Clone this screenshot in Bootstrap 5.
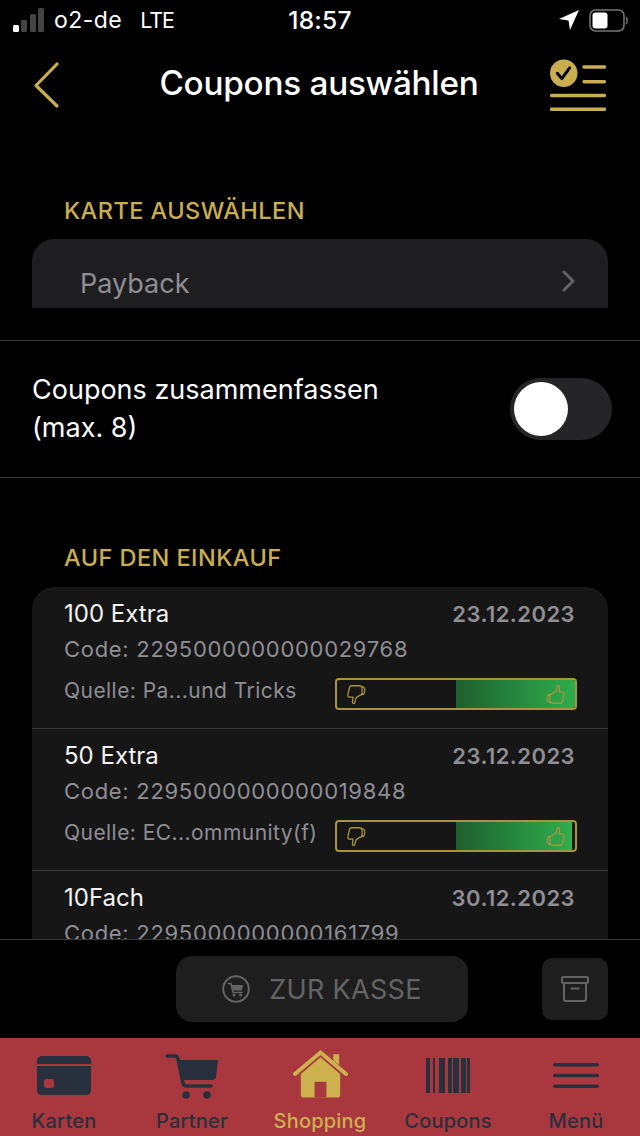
<!DOCTYPE html>
<html lang="de">
<head>
    <meta charset="UTF-8">
    <meta name="viewport" content="width=device-width, initial-scale=1.0">
    <title>Coupons auswählen</title>
    <link href="https://cdn.jsdelivr.net/npm/bootstrap@5.3.0/dist/css/bootstrap.min.css" rel="stylesheet">
    <style>
        html, body { background: #000; margin: 0; }
        body { font-family: Inter, "Liberation Sans", sans-serif; color: #fff; }
        .phone { width: 640px; height: 1136px; overflow: hidden; }

        .status-bar { height: 40px; padding: 0 12px; font-size: 23px; line-height: 40px; position: relative; }
        .status-left { gap: 9px; letter-spacing: .45px; }
        .status-time { position: absolute; left: 0; right: 0; top: 0; text-align: center; font-weight: 500; font-size: 24.500px; letter-spacing: .25px; }
        .carrier-gap { margin-left: 9px; font-size: 21.500px; letter-spacing: -1px; }

        .head-bar { height: 90px; padding: 0 34px 0 32px; }
        .head-back { width: 56px; }
        .head-title { font-size: 33.300px; font-weight: 500; letter-spacing: -.25px; line-height: 1; margin-top: -3px; }

        .scroll-area { height: 809px; overflow: hidden; }
        .gold-label { color: #c9ae4f; font-size: 23.500px; font-weight: 500; line-height: 28px; padding-left: 64px; letter-spacing: .45px; }
        .card-label { padding-top: 67px; }
        .card-select { margin: 14px 32px 0; height: 69px; background: #1e1e20; border-radius: 22px 22px 0 0; padding: 26px 32px 0 48px; color: #8e8e93; font-size: 27px; line-height: 38px; }
        .merge-row { margin-top: 32px; height: 138px; border-top: 1px solid #38383a; border-bottom: 1px solid #38383a; padding: 0 28px 0 32px; font-size: 27px; line-height: 38px; }
        .switch-track { width: 102px; height: 62px; border-radius: 31px; background: #252527; position: relative; }
        .switch-knob { width: 54px; height: 54px; border-radius: 50%; background: #fff; position: absolute; left: 4px; top: 4px; }
        .basket-label { padding-top: 66px; }
        .coupon-list { margin: 15px 32px 0; background: #161617; border-radius: 22px 22px 0 0; }
        .coupon-row { height: 142px; padding: 13px 33px 0 32px; border-bottom: 1px solid #38383a; }
        .coupon-row:last-child { border-bottom: 0; }
        .coupon-name { font-size: 24px; line-height: 28px; color: #f2f2f2; }
        .coupon-date { font-size: 22px; line-height: 28px; font-weight: 600; color: #8e8e93; letter-spacing: .45px; }
        .coupon-text { font-size: 22px; line-height: 28px; color: #8e8e93; letter-spacing: .7px; }
        .coupon-code { margin-top: 7px; }
        .coupon-source { margin-top: 15px; height: 32px; margin-right: -2px; }
        .source-text { font-size: 21px; letter-spacing: .45px; margin-top: -1px; }
        .vote-bar { width: 242px; height: 32px; border: 2px solid #a8933f; border-radius: 4px; position: relative; overflow: hidden; flex: none; }
        .vote-fill { position: absolute; left: 119px; top: 0; bottom: 0; background: linear-gradient(90deg, #1f5f30, #2fae4c); }
        .vote-down { position: absolute; left: 9px; top: 4px; }
        .vote-up { position: absolute; right: 9px; top: 4px; }

        .action-bar { height: 99px; border-top: 1px solid #38383a; padding: 16px 32px 0 176px; background: #000; }
        .checkout-btn { width: 292px; height: 66px; border-radius: 16px; background: #1e1e1f; color: #646464; font-size: 27px; gap: 19px; letter-spacing: .3px; }
        .checkout-btn span { position: relative; top: 1px; }
        .archive-btn { width: 66px; height: 62px; border-radius: 10px; background: #1e1e1f; margin-top: 2px; }

        .tab-bar { height: 98px; background: #a8373e; }
        .tab-item { width: 128px; color: #29303d; font-size: 20px; line-height: 24px; font-weight: 500; letter-spacing: .2px; }
        .tab-icon { height: 61px; margin-bottom: 10px; }
        .tab-item.is-active { color: #cdb14f; }
        .shift-card { margin-bottom: 4px; }
        .shift-house { margin-bottom: 1px; }
        .shift-codes { margin-bottom: 6px; }
        .shift-menu { margin-bottom: 11px; }
    </style>
</head>
<body>
<div class="phone d-flex flex-column">

    <!-- Status bar -->
    <div class="status-bar d-flex justify-content-between align-items-center flex-shrink-0">
        <div class="status-left d-flex align-items-center">
            <svg width="33" height="24" viewBox="0 0 33 24">
                <rect x="1" y="17" width="6" height="7" rx="1.500" fill="#fff"/>
                <rect x="9" y="12" width="6" height="12" rx="1.500" fill="#444"/>
                <rect x="18" y="6" width="6" height="18" rx="1.500" fill="#444"/>
                <rect x="26" y="0" width="6" height="24" rx="1.500" fill="#444"/>
            </svg>
            <span>o2-de</span><span class="carrier-gap">LTE</span>
        </div>
        <div class="status-time">18:57</div>
        <div class="d-flex align-items-center" style="gap:9px">
            <svg width="22" height="22" viewBox="0 0 22 22"><path d="M1 10 L21 1 L12 21 L10.500 11.500 Z" fill="#fff"/></svg>
            <svg width="39" height="23" viewBox="0 0 39 23">
                <rect x="1" y="1" width="34" height="21" rx="5.500" fill="none" stroke="#777" stroke-width="1.500"/>
                <rect x="3.500" y="3.500" width="15" height="16" rx="3" fill="#fff"/>
                <path d="M37 8 C38.500 9 38.500 14 37 15" fill="none" stroke="#777" stroke-width="1.500"/>
            </svg>
        </div>
    </div>

    <!-- Header -->
    <div class="head-bar d-flex justify-content-between align-items-center flex-shrink-0">
        <div class="head-back">
            <svg class="d-block" width="32" height="46" viewBox="0 0 32 46"><path d="M25 2 L4 23.500 L25 44" fill="none" stroke="#c9ae4f" stroke-width="3.200" stroke-linecap="round" stroke-linejoin="round"/></svg>
        </div>
        <div class="head-title">Coupons auswählen</div>
        <svg width="56" height="52" viewBox="1 0 57 52">
            <circle cx="15" cy="14" r="14" fill="#c9ae4f"/>
            <path d="M8.500 14 L13 19.500 L21 8.500" fill="none" stroke="#000" stroke-width="3" stroke-linecap="round" stroke-linejoin="round"/>
            <rect x="34" y="6" width="24" height="3.500" rx="1.500" fill="#c9ae4f"/>
            <rect x="34" y="21" width="24" height="3.500" rx="1.500" fill="#c9ae4f"/>
            <rect x="1" y="35" width="57" height="3.500" rx="1.500" fill="#c9ae4f"/>
            <rect x="1" y="49" width="57" height="3.500" rx="1.500" fill="#c9ae4f"/>
        </svg>
    </div>

    <!-- Scrolling content -->
    <div class="scroll-area flex-shrink-0">
        <div class="gold-label card-label">KARTE AUSWÄHLEN</div>
        <div class="card-select d-flex justify-content-between">
            <span>Payback</span>
            <svg class="mt-1" width="14" height="24" viewBox="0 0 14 24"><path d="M2 3 L11 12 L2 21" fill="none" stroke="#636366" stroke-width="3" stroke-linecap="round" stroke-linejoin="round"/></svg>
        </div>

        <div class="merge-row d-flex justify-content-between align-items-center">
            <div>Coupons zusammenfassen<br>(max. 8)</div>
            <div class="switch-track"><div class="switch-knob"></div></div>
        </div>

        <div class="gold-label basket-label">AUF DEN EINKAUF</div>
        <div class="coupon-list">
            <div class="coupon-row">
                <div class="d-flex justify-content-between"><span class="coupon-name">100 Extra</span><span class="coupon-date">23.12.2023</span></div>
                <div class="coupon-text coupon-code">Code: 2295000000000029768</div>
                <div class="coupon-source d-flex justify-content-between align-items-start">
                    <span class="coupon-text source-text">Quelle: Pa...und Tricks</span>
                    <div class="vote-bar">
                        <div class="vote-fill" style="width:120px"></div>
                        <svg class="vote-down" width="20" height="21" viewBox="0 0 22 24"><path d="M6 2 H15 C17 2 18 4 18 6 V10 C18 12 17 13 15 13 L11 16 L9.500 21.500 C9 23 6.500 22.500 7 20 L7.500 15 H3.500 C1.500 15 1.500 13 2 11 L3.500 4 C4 2.500 5 2 6 2 Z M17 3 C20 2.500 21 5 21 7 C21 10 20 12 18 12" fill="none" stroke="#a8933f" stroke-width="1.500"/></svg>
                        <svg class="vote-up" width="20" height="21" viewBox="0 0 22 24"><path d="M16 22 H7 C5 22 4 20 4 18 V14 C4 12 5 11 7 11 L11 8 L12.500 2.500 C13 1 15.500 1.500 15 4 L14.500 9 H18.500 C20.500 9 20.500 11 20 13 L18.500 20 C18 21.500 17 22 16 22 Z M5 21 C2 21.500 1 19 1 17 C1 14 2 12 4 12" fill="none" stroke="#a8933f" stroke-width="1.500"/></svg>
                    </div>
                </div>
            </div>
            <div class="coupon-row">
                <div class="d-flex justify-content-between"><span class="coupon-name">50 Extra</span><span class="coupon-date">23.12.2023</span></div>
                <div class="coupon-text coupon-code">Code: 2295000000000019848</div>
                <div class="coupon-source d-flex justify-content-between align-items-start">
                    <span class="coupon-text source-text">Quelle: EC...ommunity(f)</span>
                    <div class="vote-bar">
                        <div class="vote-fill" style="width:116px"></div>
                        <svg class="vote-down" width="20" height="21" viewBox="0 0 22 24"><path d="M6 2 H15 C17 2 18 4 18 6 V10 C18 12 17 13 15 13 L11 16 L9.500 21.500 C9 23 6.500 22.500 7 20 L7.500 15 H3.500 C1.500 15 1.500 13 2 11 L3.500 4 C4 2.500 5 2 6 2 Z M17 3 C20 2.500 21 5 21 7 C21 10 20 12 18 12" fill="none" stroke="#a8933f" stroke-width="1.500"/></svg>
                        <svg class="vote-up" width="20" height="21" viewBox="0 0 22 24"><path d="M16 22 H7 C5 22 4 20 4 18 V14 C4 12 5 11 7 11 L11 8 L12.500 2.500 C13 1 15.500 1.500 15 4 L14.500 9 H18.500 C20.500 9 20.500 11 20 13 L18.500 20 C18 21.500 17 22 16 22 Z M5 21 C2 21.500 1 19 1 17 C1 14 2 12 4 12" fill="none" stroke="#a8933f" stroke-width="1.500"/></svg>
                    </div>
                </div>
            </div>
            <div class="coupon-row">
                <div class="d-flex justify-content-between"><span class="coupon-name">10Fach</span><span class="coupon-date">30.12.2023</span></div>
                <div class="coupon-text coupon-code">Code: 2295000000000161799</div>
            </div>
        </div>
    </div>

    <!-- Checkout actions -->
    <div class="action-bar d-flex justify-content-between align-items-start flex-shrink-0">
        <div class="checkout-btn d-flex align-items-center justify-content-center">
            <svg width="28" height="28" viewBox="0 0 28 28">
                <circle cx="14" cy="14" r="12.800" fill="none" stroke="#646464" stroke-width="2"/>
                <path d="M6.500 8.500 H9 L11 17.500 H20" fill="none" stroke="#646464" stroke-width="1.500" stroke-linecap="round"/>
                <path d="M9.800 10 H21 L20 15.500 H11 Z" fill="#646464"/>
                <circle cx="12" cy="20" r="1.500" fill="#646464"/><circle cx="18.500" cy="20" r="1.500" fill="#646464"/>
            </svg>
            <span>ZUR KASSE</span>
        </div>
        <div class="archive-btn d-flex align-items-center justify-content-center">
            <svg width="28" height="26" viewBox="0 0 28 26" fill="none" stroke="#646464" stroke-width="2">
                <rect x="1" y="1" width="26" height="6" rx="1.500"/>
                <path d="M3 7 V23 C3 24 4 25 5 25 H23 C24 25 25 24 25 23 V7"/>
                <path d="M9.500 12.500 H18.500"/>
            </svg>
        </div>
    </div>

    <!-- Tabs -->
    <div class="tab-bar d-flex flex-shrink-0">
        <div class="tab-item text-center">
            <div class="tab-icon d-flex justify-content-center align-items-end">
                <svg class="shift-card" width="54" height="39" viewBox="0 0 54 39"><path d="M5 0 H49 C52 0 54 2 54 5 V8 H0 V5 C0 2 2 0 5 0 Z M0 10 H54 V34 C54 37 52 39 49 39 H5 C2 39 0 37 0 34 Z" fill="#29303d"/><rect x="7" y="23" width="10" height="9" rx="2" fill="#a8373e"/></svg>
            </div>
            <div>Karten</div>
        </div>
        <div class="tab-item text-center">
            <div class="tab-icon d-flex justify-content-center align-items-end">
                <svg width="54" height="45" viewBox="0 0 54 45">
                    <path d="M2 2 H10 C12 2 12.500 3 13 5 L18 29 C18.500 31 19.500 32 21 32 H46" fill="none" stroke="#29303d" stroke-width="3.500" stroke-linecap="round"/>
                    <path d="M14 6 H53 L51 23 C51 25 49 26 47 26 H18 Z" fill="#29303d"/>
                    <circle cx="21" cy="41" r="3.800" fill="#29303d"/><circle cx="42" cy="41" r="3.800" fill="#29303d"/>
                </svg>
            </div>
            <div>Partner</div>
        </div>
        <div class="tab-item text-center is-active">
            <div class="tab-icon d-flex justify-content-center align-items-end">
                <svg class="shift-house" width="55" height="48" viewBox="0 0 56 48">
                    <path d="M2 24 L28 2 L54 24" fill="none" stroke="#cdb14f" stroke-width="4" stroke-linecap="round" stroke-linejoin="round"/>
                    <path d="M41 4 H47 V15 L41 10 Z" fill="#cdb14f"/>
                    <path d="M8 24 L28 7 L48 24 V45 C48 47 47 48 45 48 H11 C9 48 8 47 8 45 Z" fill="#cdb14f"/>
                    <rect x="22" y="32" width="12" height="16" fill="#a8373e"/>
                </svg>
            </div>
            <div>Shopping</div>
        </div>
        <div class="tab-item text-center">
            <div class="tab-icon d-flex justify-content-center align-items-end">
                <svg class="shift-codes" width="44" height="35" viewBox="0 0 44 35" fill="#29303d">
                    <rect x="0" y="0" width="4" height="35"/><rect x="7" y="0" width="2" height="35"/><rect x="13" y="0" width="6" height="35"/><rect x="22" y="0" width="4" height="35"/><rect x="27" y="0" width="6" height="35"/><rect x="35" y="0" width="5" height="35"/><rect x="41" y="0" width="3" height="35"/>
                </svg>
            </div>
            <div>Coupons</div>
        </div>
        <div class="tab-item text-center">
            <div class="tab-icon d-flex justify-content-center align-items-end">
                <svg class="shift-menu" width="46" height="25" viewBox="0 0 46 25" fill="#29303d">
                    <rect width="46" height="3.600" rx="1.800" y="0"/><rect width="46" height="3.600" rx="1.800" y="10.700"/><rect width="46" height="3.600" rx="1.800" y="21.400"/>
                </svg>
            </div>
            <div>Menü</div>
        </div>
    </div>
</div>
<script src="https://cdn.jsdelivr.net/npm/bootstrap@5.3.0/dist/js/bootstrap.bundle.min.js"></script>
</body>
</html>
